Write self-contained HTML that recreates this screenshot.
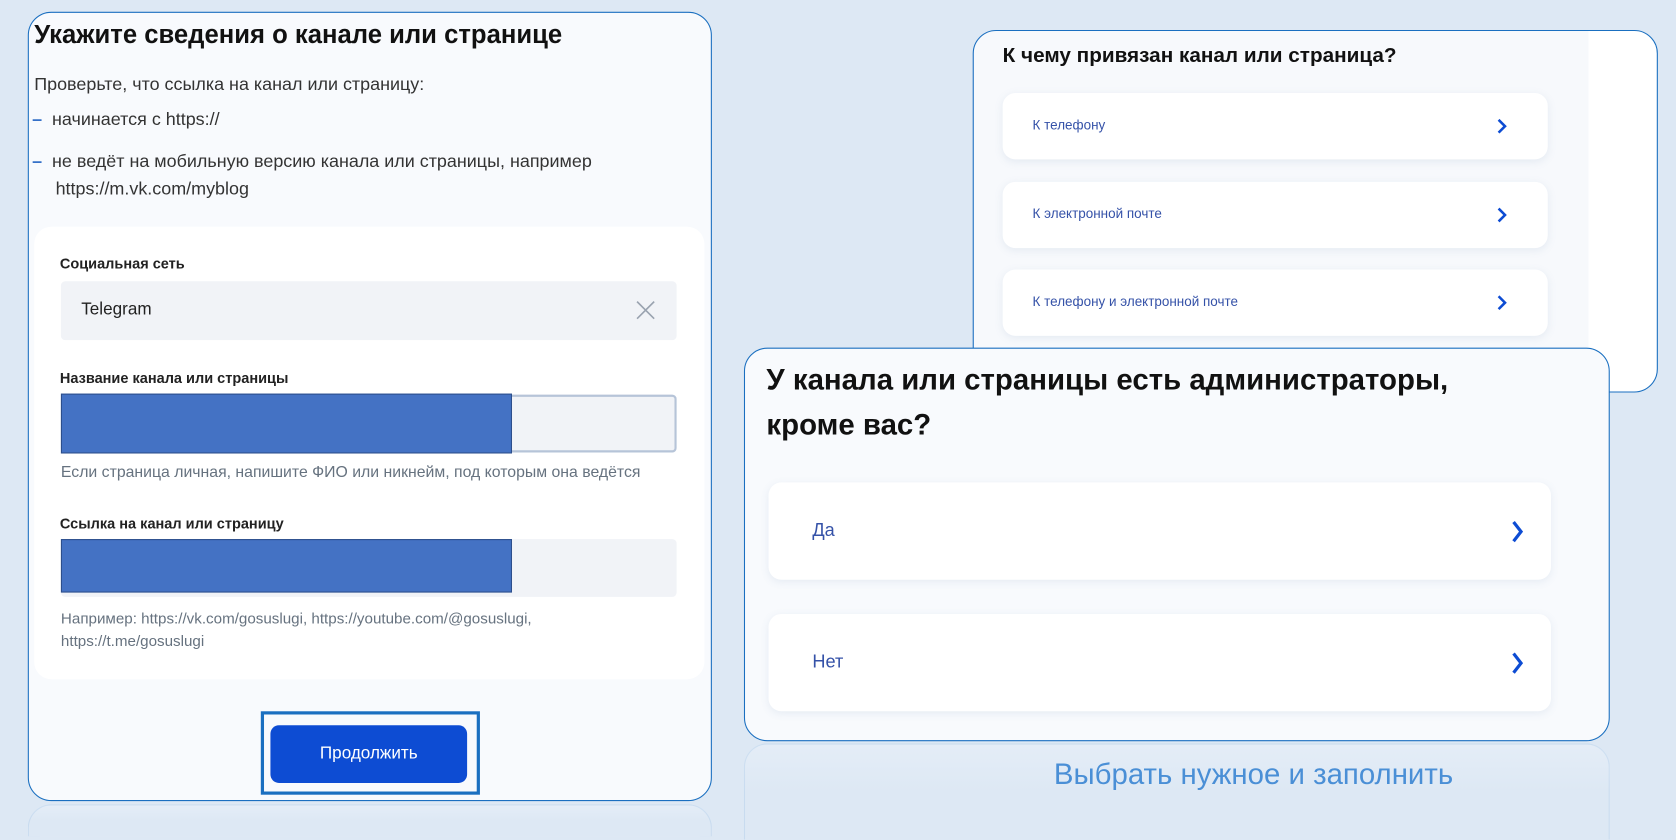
<!DOCTYPE html>
<html><head><meta charset="utf-8"><style>
*{margin:0;padding:0;box-sizing:border-box}
body{width:1676px;height:815px;overflow:hidden;background:#dde8f4;font-family:"Liberation Sans","Noto Sans CJK SC",sans-serif;position:relative;color:#0b1f33}
#w{position:absolute;left:0;top:0;width:1568px;height:762px;transform:scale(1.0689,1.0696);transform-origin:0 0}
.card{position:absolute;background:#f8fafd;border:1.5px solid #1a6fc0;border-radius:22px;overflow:hidden}
.abs{position:absolute}
.item{position:absolute;background:#fff;border-radius:12px;box-shadow:0 2px 8px rgba(100,130,170,.12);color:#3552a8}
.chev{position:absolute;top:50%;transform:translateY(-50%)}
.refl{position:absolute;border:1.5px solid rgba(26,111,192,.1);border-bottom:none;border-radius:22px 22px 0 0;background:linear-gradient(#e4edf7,#dde8f4 50%)}
</style></head><body><div id="w">
<div class="refl" style="left:26px;top:752px;width:640px;height:30px"></div>
<div class="refl" style="left:696px;top:695px;width:810px;height:90px"></div>

<div class="card" style="left:26px;top:11px;width:640px;height:738px">
 <div class="abs" style="left:5px;top:7px;font-size:24px;font-weight:bold;color:#111">Укажите сведения о канале или странице</div>
 <div class="abs" style="left:5px;top:57px;font-size:16.8px;color:#333">Проверьте, что ссылка на канал или страницу:</div>
 <div class="abs" style="left:3px;top:90px;font-size:16.8px;color:#333"><span style="color:#3570c8;font-weight:bold">–</span>&nbsp;&nbsp;начинается с https://</div>
 <div class="abs" style="left:3px;top:126px;font-size:16.8px;color:#333;line-height:26px"><span style="color:#3570c8;font-weight:bold">–</span>&nbsp;&nbsp;не ведёт на мобильную версию канала или страницы, например<br><span style="padding-left:22px">https://m.vk.com/myblog</span></div>
 <div class="abs" style="left:5px;top:200px;width:627px;height:423px;background:#fff;border-radius:16px">
  <div class="abs" style="left:24px;top:27px;font-size:13.6px;font-weight:bold;color:#222">Социальная сеть</div>
  <div class="abs" style="left:25px;top:51px;width:576px;height:55px;background:#f1f3f7;border-radius:4px">
   <div class="abs" style="left:19px;top:18px;font-size:16px;color:#222">Telegram</div>
   <svg class="abs" style="left:538px;top:18px" width="18" height="18"><path d="M1 1L17 17M17 1L1 17" stroke="#9aa3b0" stroke-width="1.5"/></svg>
  </div>
  <div class="abs" style="left:24px;top:134px;font-size:13.6px;font-weight:bold;color:#222">Название канала или страницы</div>
  <div class="abs" style="left:25px;top:157px;width:576px;height:54px;background:#f1f3f7;border:2px solid #b6c4d8;border-radius:4px"></div>
  <div class="abs" style="left:25px;top:156px;width:422px;height:56px;background:#4472c4;border:1px solid #2d4f8c"></div>
  <div class="abs" style="left:25px;top:222px;font-size:14.8px;color:#66727f">Если страница личная, напишите ФИО или никнейм, под которым она ведётся</div>
  <div class="abs" style="left:24px;top:270px;font-size:13.6px;font-weight:bold;color:#222">Ссылка на канал или страницу</div>
  <div class="abs" style="left:25px;top:292px;width:576px;height:54px;background:#f1f3f7;border-radius:4px"></div>
  <div class="abs" style="left:25px;top:292px;width:422px;height:50px;background:#4472c4;border:1px solid #2d4f8c"></div>
  <div class="abs" style="left:25px;top:357px;font-size:14.2px;color:#66727f;line-height:21px">Например: https://vk.com/gosuslugi, https://youtube.com/@gosuslugi,<br>https://t.me/gosuslugi</div>
 </div>
 <div class="abs" style="left:217px;top:653px;width:205px;height:78px;border:3px solid #1a6fc0"></div>
 <div class="abs" style="left:226px;top:666px;width:184px;height:54px;background:#0d4cd3;border-radius:8px;color:#fff;font-size:16px;text-align:center;line-height:54px">Продолжить</div>
</div>

<div class="card" style="left:910px;top:28px;width:641px;height:339px;background:linear-gradient(90deg,#f7f9fc 90%,#fff 90%)">
 <div class="abs" style="left:27px;top:12px;font-size:19.4px;font-weight:bold;color:#111">К чему привязан канал или страница?</div>
 <div class="item" style="left:27px;top:58px;width:510px;height:62px"><div class="abs" style="left:28px;top:23px;font-size:12.6px">К телефону</div><svg class="chev" style="left:462px" width="10" height="16"><path d="M2 2L8 8L2 14" stroke="#0d4cd3" stroke-width="2.4" fill="none"/></svg></div>
 <div class="item" style="left:27px;top:141px;width:510px;height:62px"><div class="abs" style="left:28px;top:23px;font-size:12.6px">К электронной почте</div><svg class="chev" style="left:462px" width="10" height="16"><path d="M2 2L8 8L2 14" stroke="#0d4cd3" stroke-width="2.4" fill="none"/></svg></div>
 <div class="item" style="left:27px;top:223px;width:510px;height:62px"><div class="abs" style="left:28px;top:23px;font-size:12.6px">К телефону и электронной почте</div><svg class="chev" style="left:462px" width="10" height="16"><path d="M2 2L8 8L2 14" stroke="#0d4cd3" stroke-width="2.4" fill="none"/></svg></div>
</div>

<div class="card" style="left:696px;top:325px;width:810px;height:368px">
 <div class="abs" style="left:20px;top:8px;font-size:27.5px;font-weight:bold;color:#111;line-height:42px">У канала или страницы есть администраторы,<br>кроме вас?</div>
 <div class="item" style="left:22px;top:125px;width:732px;height:91px"><div class="abs" style="left:41px;top:35px;font-size:17px">Да</div><svg class="chev" style="left:695px" width="12" height="22"><path d="M2 2L9 11L2 20" stroke="#0d4cd3" stroke-width="3" fill="none"/></svg></div>
 <div class="item" style="left:22px;top:248px;width:732px;height:91px"><div class="abs" style="left:41px;top:35px;font-size:17px">Нет</div><svg class="chev" style="left:695px" width="12" height="22"><path d="M2 2L9 11L2 20" stroke="#0d4cd3" stroke-width="3" fill="none"/></svg></div>
</div>

<div class="abs" style="left:986px;top:708px;font-size:27.5px;color:#4a8fd6">Выбрать нужное и заполнить</div>
</div></body></html>
